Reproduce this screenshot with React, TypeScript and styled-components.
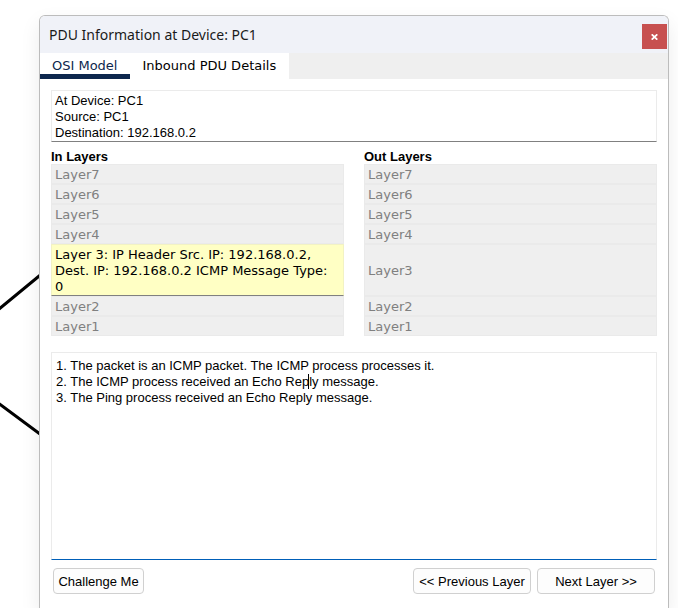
import React, { useState } from "react";
import styled, { createGlobalStyle } from "styled-components";

const GlobalStyle = createGlobalStyle`
  *, *::before, *::after { box-sizing: border-box; }
  body { margin: 0; background: #ffffff; }
  button, textarea { font: inherit; color: inherit; margin: 0; }
`;

const sans = `"Liberation Sans", Arial, sans-serif`;
const wide = `"DejaVu Sans", Verdana, sans-serif`;

const Workspace = styled.main`
  position: relative;
  display: flex;
  height: 100vh;
  overflow: hidden;
  padding: 15px 9px 0 39px;
  font: 13px/16px ${sans};
  color: #000000;
`;

const Links = styled.svg`
  position: absolute;
  left: 0;
  top: 0;
`;

const Dialog = styled.section`
  position: relative;
  flex: 1;
  min-width: 0;
  display: flex;
  flex-direction: column;
  border: 1px solid #bcbcbc;
  border-bottom: 0;
  border-radius: 6px 6px 0 0;
  background: #ffffff;
  box-shadow: 0 8px 20px rgba(0, 0, 0, 0.08);
`;

const TitleBar = styled.header`
  display: flex;
  align-items: center;
  justify-content: space-between;
  height: 37px;
  padding-left: 9px;
  border-radius: 5px 5px 0 0;
  background: #f0f2f8;
`;

const Title = styled.h1`
  margin: 0;
  color: #1a1a1a;
  font: 400 14px/20px "Noto Sans", "Segoe UI", sans-serif;
`;

const CloseButton = styled.button`
  display: grid;
  place-items: center;
  align-self: flex-end;
  width: 25px;
  height: 25px;
  margin: 0 1px 4px 0;
  padding: 0;
  border: 0;
  background: #c75050;
`;

const TabBar = styled.div`
  display: flex;
  background: #efefef;
`;

const Tab = styled.button<{ $active: boolean }>`
  height: 26px;
  padding: 5px 13px 0 12px;
  border: 0;
  border-bottom: 5px solid ${(p) => (p.$active ? "#0d274d" : "#ffffff")};
  background: #ffffff;
  color: ${(p) => (p.$active ? "#0d274d" : "#000000")};
  font: 13px/16px ${wide};
  white-space: nowrap;
`;

const Panel = styled.div`
  flex: 1;
  padding: 11px 11px 0;
`;

const TextBox = styled.textarea`
  display: block;
  width: 100%;
  resize: none;
  overflow: hidden;
  outline: 0;
  border: 1px solid #ebebeb;
  background: #ffffff;
`;

const Summary = styled(TextBox)`
  height: 52px;
  padding: 2px 3px 0;
  border-bottom-color: #808080;
`;

const Layers = styled.div`
  display: grid;
  grid-auto-flow: column;
  grid-template-rows: repeat(8, auto);
  grid-auto-columns: minmax(0, 1fr);
  column-gap: 20px;
  margin: 6px 0 16px;
`;

const Heading = styled.h2`
  margin: 0;
  padding-top: 1px;
  font: 700 13px/15px ${sans};
`;

const Layer = styled.button<{ $active: boolean }>`
  display: flex;
  align-items: center;
  min-height: 20px;
  padding: 2px 1px 0 3px;
  border: 1px solid ${(p) => (p.$active ? "#f2f2c4" : "#eaeaea")};
  border-bottom-color: ${(p) => (p.$active ? "#808080" : "#eaeaea")};
  background: ${(p) => (p.$active ? "#ffffc4" : "#efefef")};
  color: ${(p) => (p.$active ? "#000000" : "#808080")};
  font: 13px/16px ${wide};
  text-align: left;
  white-space: pre-line;

  &:disabled { color: #808080; }
`;

const DetailsArea = styled.div`
  position: relative;
`;

const Details = styled(TextBox)`
  height: 208px;
  padding: 5px 4px;
  border-bottom-color: #005fb8;
`;

const Caret = styled.span`
  position: absolute;
  left: 257px;
  top: 22px;
  width: 1px;
  height: 15px;
  background: #000000;
`;

const Footer = styled.footer`
  display: flex;
  gap: 6px;
  padding: 8px 2px 14px;
`;

const PushButton = styled.button<{ $wide?: boolean }>`
  width: ${(p) => (p.$wide ? "118px" : "91px")};
  height: 26px;
  padding: 2px 0 0;
  border: 1px solid #d0d0d0;
  border-radius: 4px;
  background: #fdfdfd;
  white-space: nowrap;

  &:first-child { margin-right: auto; }
`;

const summary = "At Device: PC1\nSource: PC1\nDestination: 192.168.0.2";

const steps = `1. The packet is an ICMP packet. The ICMP process processes it.
2. The ICMP process received an Echo Reply message.
3. The Ping process received an Echo Reply message.`;

const layerNumbers = [7, 6, 5, 4, 3, 2, 1];
const inboundText: Record<number, string> = {
  3: "Layer 3: IP Header Src. IP: 192.168.0.2,\nDest. IP: 192.168.0.2 ICMP Message Type:\n0",
};

function LayerColumn({ title, active }: { title: string; active: Record<number, string> }) {
  return (
    <>
      <Heading>{title}</Heading>
      {layerNumbers.map((n) => (
        <Layer key={n} type="button" $active={n in active} disabled={!(n in active)}>
          {active[n] ?? `Layer${n}`}
        </Layer>
      ))}
    </>
  );
}

export default function App() {
  const [tab, setTab] = useState(0);
  const [details, setDetails] = useState(steps);
  return (
    <Workspace>
      <GlobalStyle />
      <Links width="60" height="460" viewBox="0 0 60 460" aria-hidden="true">
        <path d="M-4 311.5 44 272M-4 401.5 44 437" fill="none" stroke="#000" strokeWidth="3" />
      </Links>
      <Dialog role="dialog" aria-labelledby="dialog-title">
        <TitleBar>
          <Title id="dialog-title">PDU Information at Device: PC1</Title>
          <CloseButton type="button" aria-label="Close">
            <svg width="7" height="6" viewBox="0 0 7 6" aria-hidden="true">
              <path d="M.7.3 6.3 5.7M6.3.3.7 5.7" stroke="#fff" strokeWidth="1.7" />
            </svg>
          </CloseButton>
        </TitleBar>
        <TabBar role="tablist">
          {["OSI Model", "Inbound PDU Details"].map((name, i) => (
            <Tab
              key={name}
              type="button"
              role="tab"
              aria-selected={tab === i}
              $active={tab === i}
              onClick={() => setTab(i)}
            >
              {name}
            </Tab>
          ))}
        </TabBar>
        <Panel role="tabpanel">
          <Summary aria-label="PDU summary" readOnly value={summary} />
          <Layers>
            <LayerColumn title="In Layers" active={inboundText} />
            <LayerColumn title="Out Layers" active={{}} />
          </Layers>
          <DetailsArea>
            <Details
              aria-label="Layer details"
              spellCheck={false}
              value={details}
              onChange={(e) => setDetails(e.target.value)}
            />
            <Caret />
          </DetailsArea>
          <Footer>
            <PushButton type="button">Challenge Me</PushButton>
            <PushButton type="button" $wide>&lt;&lt; Previous Layer</PushButton>
            <PushButton type="button" $wide>Next Layer &gt;&gt;</PushButton>
          </Footer>
        </Panel>
      </Dialog>
    </Workspace>
  );
}
